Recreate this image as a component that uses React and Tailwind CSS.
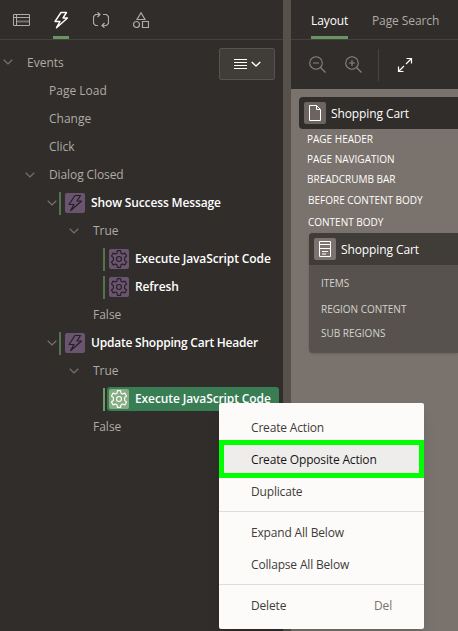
const Svg = ({ size = 16, className = '', children, sw = 1 }) => (
  <svg width={size} height={size} viewBox={`0 0 ${size} ${size}`} fill="none" stroke="currentColor" strokeWidth={sw} className={`block shrink-0 ${className}`}>
    {children}
  </svg>
);

const Bolt = ({ className, sw = 1.2 }) => (
  <Svg size={18} className={className} sw={sw}>
    <path d="M9 1.500h5.500L11 7h4.500L4.500 16.700 8 10.500H3z" strokeLinejoin="round" />
  </Svg>
);

const Gear = () => (
  <svg width="18" height="18" viewBox="0 0 16 16" fill="none" stroke="currentColor" strokeWidth="1" className="block shrink-0">
    <path strokeLinejoin="round" d="M6.600.6h2.800l.4 2.200 1.300.8 2.100-.8 1.500 2.500-1.700 1.500v2.400l1.700 1.500-1.500 2.500-2.100-.8-1.300.8-.4 2.200H6.600l-.4-2.200-1.300-.8-2.100.8-1.500-2.500L3 9.200V6.800L1.300 5.300l1.500-2.500 2.100.8 1.300-.8z" />
    <circle cx="8" cy="8" r="2.200" />
  </svg>
);

const Chevron = () => (
  <Svg size={10} className="text-[#77736f]" sw={1.2}>
    <path d="M.7 2.800L5 7l4.300-4.200" />
  </Svg>
);

function Group({ label, pad, text = '', open }) {
  return (
    <div className={`flex h-7 items-center text-[#aeaba8] ${pad}`}>
      {open && <Chevron />}
      <span className={`whitespace-nowrap ${text}`}>{label}</span>
    </div>
  );
}

function Event({ label, text }) {
  return (
    <div className="flex h-7 items-center pl-[47px]">
      <Chevron />
      <i className="ml-[2px] h-[23px] w-[2px] bg-[#55734c]" />
      <span className="ml-1 flex size-5 items-center justify-center rounded-xs bg-[#6a5470] text-[#241f26]"><Bolt /></span>
      <span className={`ml-[6px] whitespace-nowrap font-semibold text-white ${text}`}>{label}</span>
    </div>
  );
}

function Action({ label, selected }) {
  return (
    <div className="flex h-7 items-center pl-[103px]">
      <i className={`h-[23px] w-[2px] ${selected ? 'bg-[#6f9c66]' : 'bg-[#55734c]'}`} />
      <div className={`ml-[2px] flex h-6 items-center rounded-[3px] pl-[2px] ${selected ? 'w-[172px] bg-[#387d54]' : ''}`}>
        <span className={`flex size-5 items-center justify-center rounded-xs ${selected ? 'bg-[#87ad82] text-white' : 'bg-[#6a5470] text-[#241f26]'}`}><Gear /></span>
        <span className="ml-[6px] whitespace-nowrap font-semibold tracking-[-0.11px] text-white">{label}</span>
      </div>
    </div>
  );
}

function MenuItem({ label, keys, active }) {
  return (
    <div className={`flex h-8 items-center justify-between pt-[2px] pr-8 pl-8 tracking-[-0.17px] ${active ? 'bg-[#efedec] text-[#161513]' : 'text-[#3f3b38]'}`}>
      <span className="whitespace-nowrap">{label}</span>
      {keys && <span className="text-[#77736f]">{keys}</span>}
    </div>
  );
}

const Label = ({ children, className }) => (
  <div className={`flex items-center whitespace-nowrap text-[10px] ${className}`}><span>{children}</span></div>
);

export default function App() {
  return (
    <div className="relative flex h-[631px] w-[458px] overflow-hidden bg-[#312d2a] font-['Open_Sans',sans-serif] text-[12px]">
      <aside className="w-[283px] shrink-0">
        <nav className="flex h-10 items-start gap-6 border-b border-[#45413e] pl-[13px] text-[#aeaba8]">
          <div className="flex h-[39px] w-4 items-center"><Svg size={17}><path d="M.5 3.500h16v11H.5zM.5 6.500h16M3.500 3.500v11" /><path d="M4 10.500h12" strokeWidth="2" stroke="#77736f" /></Svg></div>
          <div className="flex h-[39px] w-4 items-center justify-center border-b-[3px] border-[#6b9560] pt-[3px] text-white"><Bolt sw={1.4} /></div>
          <div className="flex h-[39px] w-4 items-center"><Svg sw={1.2}><path d="M5 13.500H2.500l-2-2v-7l2-2H7M4.500.3L7 2.500 4.500 5M10 2.500h3.500l2 2v7l-2 2H9M11.500 11L9 13.500l2.500 2.300" /></Svg></div>
          <div className="flex h-[39px] w-4 items-center"><Svg sw={1.2}><path d="M8 .8l4 6.700H4zM9.500 9.500h6v6h-6z" /><circle cx="3.500" cy="12.500" r="3" /></Svg></div>
        </nav>
        <div className="flex h-[37px] items-start justify-between pr-2">
          <div className="pt-2"><Group label="Events" pad="pl-[3px]" text="pl-[14px] pt-px" open /></div>
          <div className="mt-2 flex h-8 w-14 items-center justify-center gap-1 rounded-[2px] border border-[#57534e] bg-[#403c38] text-white">
            <Svg size={13}><path d="M0 1.500h13M0 4.500h13M0 7.500h13M0 10.500h13" /></Svg>
            <Svg size={10} sw={1.3}><path d="M.7 3L5 7l4.300-4" /></Svg>
          </div>
        </div>
        <Group label="Page Load" pad="pl-[49px]" />
        <Group label="Change" pad="pl-[49px]" />
        <Group label="Click" pad="pl-[49px]" />
        <Group label="Dialog Closed" pad="pl-[25px]" text="pl-[14px] tracking-[-0.1px]" open />
        <Event label="Show Success Message" text="tracking-[-0.13px]" />
        <Group label="True" pad="pl-[69px]" text="pl-[14px]" open />
        <Action label="Execute JavaScript Code" />
        <Action label="Refresh" />
        <Group label="False" pad="pl-[93px]" />
        <Event label="Update Shopping Cart Header" text="tracking-[-0.22px]" />
        <Group label="True" pad="pl-[69px]" text="pl-[14px]" open />
        <Action label="Execute JavaScript Code" selected />
        <Group label="False" pad="pl-[93px]" />
      </aside>
      <div className="w-2 shrink-0 bg-[#56514a]" />
      <main className="flex min-w-0 grow flex-col bg-[#7a726c]">
        <nav className="flex h-10 shrink-0 gap-6 border-b border-[#45413e] bg-[#312d2a] pl-5">
          <div className="flex h-[39px] w-[37px] items-center whitespace-nowrap border-b-[3px] border-[#6b9560] pt-[6px] tracking-[-0.1px] text-white">Layout</div>
          <div className="flex h-10 items-center whitespace-nowrap pt-[2px] tracking-[-0.1px] text-[#aeaba8]">Page Search</div>
        </nav>
        <div className="flex h-[49px] shrink-0 items-center bg-[#312d2a] pl-[18px] text-[#8a8682]">
          <Svg size={17} sw={1.1}><circle cx="7" cy="7" r="6.300" /><path d="M11.500 11.500l5 5M4 7h6" /></Svg>
          <Svg size={17} sw={1.1} className="ml-[19px]"><circle cx="7" cy="7" r="6.300" /><path d="M11.500 11.500l5 5M4 7h6M7 4v6" /></Svg>
          <i className="ml-[16px] h-8 w-px bg-[#494541]" />
          <Svg className="ml-[18px] text-white" sw={1.2}><path d="M9.500 1.500h5v5M14 2L9 7M6.500 14.500h-5v-5M2 14l5-5" /></Svg>
        </div>
        <div className="mt-2 ml-2 flex h-8 items-center rounded-l bg-[#312d2a] pl-[5px] text-white">
          <span className="flex size-[22px] items-center justify-center rounded-xs bg-[#6b6461]"><Svg><path d="M2.500.5h7l4 4v11h-11zM9.500.5v4h4" /></Svg></span>
          <span className="ml-[5px] whitespace-nowrap pt-[2px] tracking-[-0.1px]">Shopping Cart</span>
        </div>
        <div className="pl-4 text-white">
          <Label className="h-5">PAGE HEADER</Label>
          <Label className="h-5">PAGE NAVIGATION</Label>
          <Label className="h-5">BREADCRUMB BAR</Label>
          <Label className="h-[22px] pl-px">BEFORE CONTENT BODY</Label>
          <Label className="h-[22px] pl-px pt-px">CONTENT BODY</Label>
        </div>
        <section className="ml-[18px] h-[120px] overflow-hidden rounded-l bg-[#57524d] text-[#d5d2d0] shadow-sm">
          <div className="flex h-8 items-center bg-[#403c38] pl-[5px] text-white">
            <span className="flex size-[22px] items-center justify-center rounded-xs bg-[#7a7370]"><Svg><path d="M2.500.5h11v15h-11zM2.500 3.500h11M2.500 7.500h11M5 10.500h6M5 13h4" /></Svg></span>
            <span className="ml-[5px] whitespace-nowrap pt-[2px] tracking-[-0.1px]">Shopping Cart</span>
          </div>
          <Label className="mt-[5px] h-[26px] pl-3">ITEMS</Label>
          <Label className="h-[26px] pl-3">REGION CONTENT</Label>
          <Label className="h-[22px] pl-3">SUB REGIONS</Label>
        </section>
      </main>
      <div className="absolute top-[403px] left-[219px] h-[226px] w-[205px] rounded-[2px] bg-[#fcfbfa] py-2 shadow-lg">
        <MenuItem label="Create Action" />
        <MenuItem label="Create Opposite Action" active />
        <MenuItem label="Duplicate" />
        <div className="mt-1 mb-1 h-px bg-[#dfdddb]" />
        <MenuItem label="Expand All Below" />
        <MenuItem label="Collapse All Below" />
        <div className="mt-1 mb-1 h-px bg-[#dfdddb]" />
        <MenuItem label="Delete" keys="Del" />
        <div className="absolute top-[37px] left-0 h-[38px] w-full border-[5px] border-[#00ff00]" />
      </div>
    </div>
  );
}
